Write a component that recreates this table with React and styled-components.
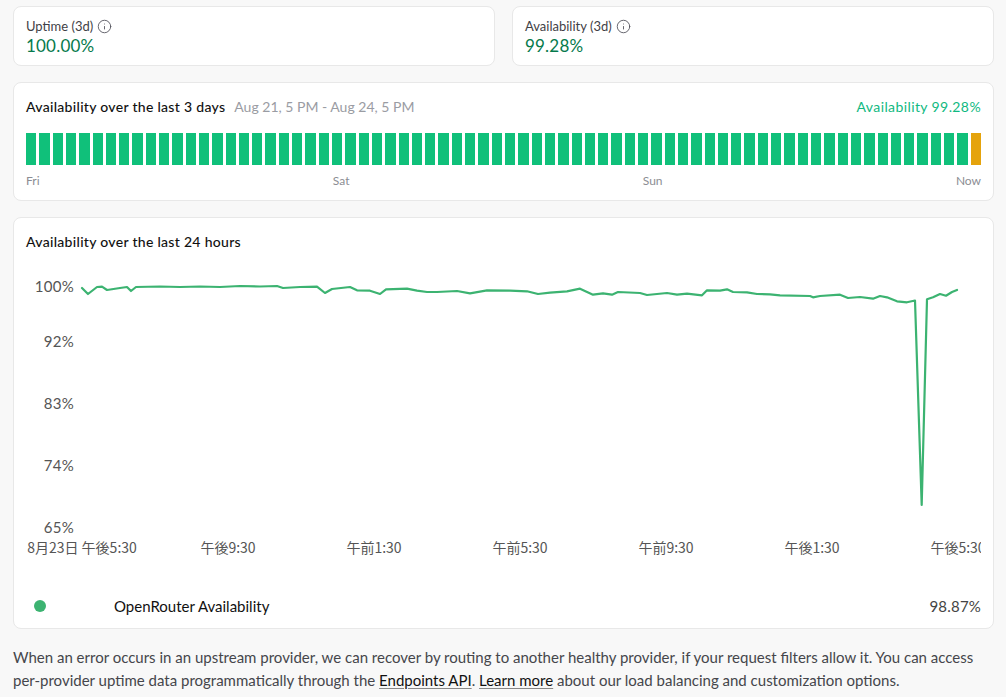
import React from "react";
import styled, { createGlobalStyle } from "styled-components";
import { Info } from "lucide-react";

const GlobalStyle = createGlobalStyle`
  html, body {
    margin: 0;
    padding: 0;
    background: #f8f8f8;
  }
  body {
    font-family: Lato, "Noto Sans", sans-serif;
    color: #111;
  }
`;

const Page = styled.div`
  display: flex;
  flex-direction: column;
  gap: 16px;
  padding: 6px 12px 0 13px;
`;

const StatGrid = styled.div`
  display: grid;
  grid-template-columns: 1fr 1fr;
  gap: 17px;
`;

const Card = styled.div`
  background: #fff;
  border: 1px solid #e8e8e8;
  border-radius: 8px;
  padding: ${(p) => p.$pad || "13px 12px 11px"};
`;

const StatLabel = styled.div`
  display: flex;
  align-items: center;
  gap: 4px;
  font-size: 13px;
  line-height: 18px;
  color: #3f3f46;
  svg {
    color: #52525b;
  }
`;

const StatValue = styled.div`
  font-size: 17px;
  line-height: 22px;
  color: #067a4c;
  letter-spacing: 0.2px;
`;

const CardHeader = styled.div`
  display: flex;
  align-items: baseline;
  font-size: 14px;
  line-height: 22px;
`;

const CardTitle = styled.span`
  color: #111;
  font-weight: 500;
  letter-spacing: 0.3px;
`;

const CardSub = styled.span`
  margin-left: 9px;
  color: #9a9ca3;
`;

const Headline = styled.span`
  margin-left: auto;
  color: #10b981;
  letter-spacing: 0.4px;
`;

const Bars = styled.div`
  display: grid;
  grid-template-columns: repeat(72, 1fr);
  gap: 3px;
  height: 32px;
  margin-top: 15px;
`;

const Bar = styled.div`
  background: ${(p) => (p.$warn ? "#e5a30c" : "#10c07a")};
`;

const DayRow = styled.div`
  display: flex;
  justify-content: space-between;
  margin-top: 8px;
  font-size: 12px;
  line-height: 16px;
  color: #8b8d93;
`;

const Chart = styled.svg`
  display: block;
  width: 100%;
  height: 320px;
  overflow: hidden;
`;

const LegendRow = styled.div`
  display: flex;
  align-items: center;
  margin-top: 23px;
  font-size: 15px;
  line-height: 20px;
`;

const Dot = styled.span`
  width: 12px;
  height: 12px;
  border-radius: 50%;
  background: #3cb371;
  margin-left: 8px;
`;

const LegendName = styled.span`
  margin-left: 68px;
  color: #111;
`;

const LegendValue = styled.span`
  margin-left: auto;
  color: #444;
  letter-spacing: 0.2px;
`;

const Note = styled.p`
  margin: 1px 0 0;
  font-size: 15px;
  line-height: 23px;
  color: #45464b;
  a {
    color: #111;
    text-decoration: underline;
    text-underline-offset: 2px;
    text-decoration-color: #888;
  }
`;

const linePoints = [
  [82, 288], [88, 294], [97, 287], [102, 286.7], [107, 290], [120, 288],
  [127, 287], [131, 291], [136, 287], [160, 286.5], [180, 287], [200, 286.5],
  [220, 287], [240, 286], [260, 286.5], [277, 286], [283, 288], [300, 287],
  [317, 286.7], [325, 293], [332, 289], [350, 287], [357, 290.3], [370, 290.7],
  [380, 294], [386, 289.3], [407, 288.7], [417, 290.7], [427, 292], [437, 292],
  [457, 291], [470, 293.3], [487, 290.3], [510, 290.7], [527, 291.3], [538, 294],
  [550, 292.7], [567, 291.3], [580, 288.7], [593, 294.7], [603, 293.3],
  [612, 294.7], [618, 292], [640, 293], [647, 295], [667, 293], [677, 294.7],
  [687, 293.7], [702, 295.3], [707, 290.3], [720, 290.7], [727, 289.3],
  [733, 292], [747, 292.3], [757, 294], [770, 294.3], [780, 295.3], [810, 296],
  [813, 297.3], [820, 296], [840, 294.7], [848, 298], [860, 297], [873, 298.7],
  [880, 296], [887, 297.3], [897, 301.3], [907, 302.3], [915, 300.5],
  [921.7, 505], [927, 299.3], [933, 297.3], [940, 294], [946, 295.7],
  [952, 292], [957, 290],
];

const yTicks = [
  ["100%", 286],
  ["92%", 341],
  ["83%", 403],
  ["74%", 465],
  ["65%", 527],
];

const xTicks = [
  ["8月23日 午後5:30", 82],
  ["午後9:30", 228],
  ["午前1:30", 374],
  ["午前5:30", 520],
  ["午前9:30", 666],
  ["午後1:30", 812],
  ["午後5:30", 958],
];

// chart svg origin in page coords
const OX = 26;
const OY = 253;

const AvailabilityChart = () => {
  const path = linePoints
    .map(([x, y], i) => `${i ? "L" : "M"}${x - OX},${y - OY}`)
    .join(" ");
  return (
    <Chart viewBox="0 0 955 320" preserveAspectRatio="none">
      {yTicks.map(([label, y]) => (
        <text
          key={label}
          x={74 - OX}
          y={y - OY}
          textAnchor="end"
          dominantBaseline="central"
          fontSize="15"
          fill="#555"
          fontFamily="Lato, sans-serif"
          letterSpacing="0.3"
        >
          {label}
        </text>
      ))}
      {xTicks.map(([label, x]) => (
        <text
          key={label + x}
          x={x - OX}
          y={547 - OY}
          textAnchor="middle"
          dominantBaseline="central"
          fontSize="14"
          fill="#555"
          fontFamily='"Noto Sans CJK JP", sans-serif'
        >
          {label}
        </text>
      ))}
      <path
        d={path}
        fill="none"
        stroke="#3cb371"
        strokeWidth="2.2"
        strokeLinejoin="round"
        strokeLinecap="round"
      />
    </Chart>
  );
};

const App = () => {
  const bars = Array.from({ length: 72 }, (_, i) => i === 71);
  return (
    <>
      <GlobalStyle />
      <Page>
        <StatGrid>
          <Card $pad="10px 12px 8px">
            <StatLabel>
              Uptime (3d) <Info size={15} strokeWidth={1.4} />
            </StatLabel>
            <StatValue>100.00%</StatValue>
          </Card>
          <Card $pad="10px 12px 8px">
            <StatLabel>
              Availability (3d) <Info size={15} strokeWidth={1.4} />
            </StatLabel>
            <StatValue>99.28%</StatValue>
          </Card>
        </StatGrid>

        <Card>
          <CardHeader>
            <CardTitle>Availability over the last 3 days</CardTitle>
            <CardSub>Aug 21, 5 PM - Aug 24, 5 PM</CardSub>
            <Headline>Availability 99.28%</Headline>
          </CardHeader>
          <Bars>
            {bars.map((warn, i) => (
              <Bar key={i} $warn={warn} />
            ))}
          </Bars>
          <DayRow>
            <span>Fri</span>
            <span>Sat</span>
            <span>Sun</span>
            <span>Now</span>
          </DayRow>
        </Card>

        <Card $pad="13px 12px 12px">
          <CardHeader>
            <CardTitle>Availability over the last 24 hours</CardTitle>
          </CardHeader>
          <AvailabilityChart />
          <LegendRow>
            <Dot />
            <LegendName>OpenRouter Availability</LegendName>
            <LegendValue>98.87%</LegendValue>
          </LegendRow>
        </Card>

        <Note>
          When an error occurs in an upstream provider, we can recover by
          routing to another healthy provider, if your request filters allow
          it. You can access per-provider uptime data programmatically through
          the <a href="#">Endpoints API</a>. <a href="#">Learn more</a> about
          our load balancing and customization options.
        </Note>
      </Page>
    </>
  );
};

export default App;
